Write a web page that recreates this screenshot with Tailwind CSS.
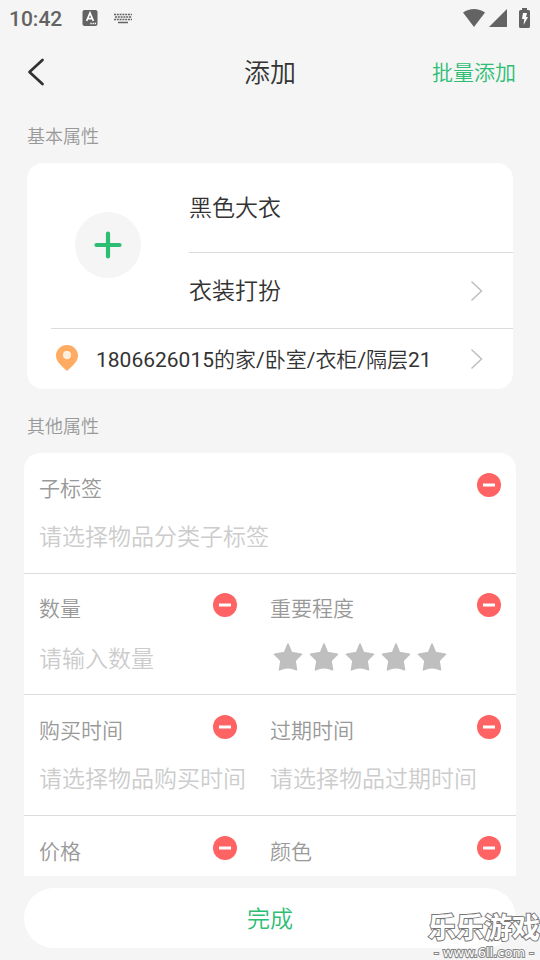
<!DOCTYPE html>
<html lang="zh-CN">
<head>
<meta charset="utf-8">
<meta name="viewport" content="width=device-width, initial-scale=1">
<title>添加</title>
<script src="https://cdn.jsdelivr.net/npm/@tailwindcss/browser@4"></script>
</head>
<body class="bg-[#f5f5f5] font-['Roboto','Noto_Sans_CJK_SC',sans-serif] text-[#333]">
<svg class="hidden" aria-hidden="true">
  <symbol id="minus" viewBox="0 0 24 24"><circle cx="12" cy="12" r="12" fill="#ff6363"/><path d="M6 12h12" stroke="#fff" stroke-width="3"/></symbol>
  <symbol id="chevron" viewBox="0 0 12 20"><path d="M1 1l9.500 9L1 19" fill="none" stroke="#bfbfbf" stroke-width="1.600" stroke-linecap="round" stroke-linejoin="round"/></symbol>
  <symbol id="star" viewBox="0 0 30 30"><path d="M15 2L18.400 10.600 28.500 12.200 22 18.600 23.500 27.800Q15 23.400 6.500 27.800L8 18.600 1.500 12.200 11.600 10.600z" fill="#bfbfbf" stroke="#bfbfbf" stroke-width="1.600" stroke-linejoin="round"/></symbol>
</svg>
<div class="relative flex h-screen flex-col overflow-hidden">
  <div class="flex h-9 shrink-0 items-center pl-[9px] pr-[10px] text-[#636363]">
    <span class="pt-px text-[21px] leading-9 font-medium">10:42</span>
    <svg class="ml-5 h-4 w-4" viewBox="0 0 16 16"><rect x=".5" width="15" height="16" rx="2" fill="currentColor"/><path d="M4.600 11L8 3l3.400 8M5.800 8.600h4.400" fill="none" stroke="#fff" stroke-width="1.700"/><path d="M8.300 13.500h1.400m.8 0h1.400m.8 0h1.400" stroke="#fff" stroke-width="1.300"/></svg>
    <svg class="ml-[15px] h-[11px] w-5" viewBox="0 0 20 11"><path d="M1 1.500h18M2 4h17M1 6.500h18" stroke="currentColor" stroke-width="1.700" stroke-dasharray="2 .8"/><path d="M5 9.500h10" stroke="currentColor" stroke-width="1.500"/></svg>
    <svg class="ml-auto h-5 w-[22px]" viewBox="0 0 22 20"><path d="M0 4.500C6.500-.2 15.500-.2 22 4.500L11 19z" fill="currentColor"/></svg>
    <svg class="ml-1 h-[18px] w-[18px]" viewBox="0 0 18 18"><path d="M18 0v18H0z" fill="currentColor"/></svg>
    <svg class="ml-3 h-5 w-[11px]" viewBox="0 0 11 20"><path d="M3 0h5v2h1.500Q11 2 11 3.500v15Q11 20 9.500 20h-8Q0 20 0 18.500v-15Q0 2 1.500 2H3z" fill="currentColor"/><path d="M4 5h4l-1 4h2l-4.500 8 .8-6H3z" fill="#fff"/></svg>
  </div>
  <header class="grid h-[72px] shrink-0 grid-cols-[1fr_auto_1fr] items-center px-6">
    <button type="button" aria-label="返回" class="justify-self-start"><svg class="h-8 w-6" viewBox="0 0 24 32"><path d="M18.500 4L5.500 16l13 12" fill="none" stroke="#303133" stroke-width="2.700" stroke-linecap="round" stroke-linejoin="round"/></svg></button>
    <h1 class="pt-0.5 text-[26px] leading-8 font-[350]">添加</h1>
    <button type="button" class="justify-self-end pt-0.5 text-[21px] leading-8 font-[350] text-[#2dbe74]">批量添加</button>
  </header>
  <main class="min-h-0 flex-1 overflow-y-auto [scrollbar-width:none]">
    <h2 class="px-[27px] pt-[17px] text-[18px] leading-6 font-[350] text-[#999]">基本属性</h2>
    <section class="mx-[27px] mt-[14px] rounded-[16px] bg-white">
      <div class="flex">
        <div class="flex w-[162px] shrink-0 items-center justify-center pb-0.5">
          <button type="button" aria-label="添加图片" class="flex h-[66px] w-[66px] items-center justify-center rounded-full bg-[#f5f5f5]"><svg class="h-7 w-7" viewBox="0 0 28 28"><path d="M14 2.500v23M2.500 14h23" stroke="#2dbe74" stroke-width="4.200" stroke-linecap="round"/></svg></button>
        </div>
        <div class="min-w-0 flex-1">
          <input type="text" aria-label="物品名称" value="黑色大衣" class="block h-[90px] w-full border-b border-[#dcdcdc] pb-1 text-[23px] font-[350] outline-none">
          <button type="button" class="flex h-[75px] w-full items-center justify-between pr-[30px] text-[23px] font-[350]"><span class="pt-1">衣装打扮</span><svg class="h-5 w-3"><use href="#chevron"/></svg></button>
        </div>
      </div>
      <button type="button" class="ml-6 flex h-[61px] w-[calc(100%-24px)] items-center border-t border-[#dcdcdc] pr-[30px] pl-[5px] text-[21px] font-[350]">
        <svg class="mb-0.5 h-[26px] w-[22px]" viewBox="0 0 22 26"><path d="M11 0C4.900 0 0 4.800 0 10.800 0 16.500 5.500 21 11 26c5.500-5 11-9.500 11-15.200C22 4.800 17.100 0 11 0z" fill="#ffab61"/><circle cx="11" cy="10" r="4.200" fill="#ffeddd"/></svg>
        <span class="ml-[18px] pt-[3px] font-normal">1806626015<span class="font-[350]">的家</span>/<span class="font-[350]">卧室</span>/<span class="font-[350]">衣柜</span>/<span class="font-[350]">隔层</span>21</span>
        <svg class="ml-auto h-5 w-3"><use href="#chevron"/></svg>
      </button>
    </section>
    <h2 class="px-[27px] pt-[26px] text-[18px] leading-6 font-[350] text-[#999]">其他属性</h2>
    <section class="mx-6 mt-[14px] rounded-[16px] bg-white text-[21px] font-[350] text-[#999]">
      <div class="h-[121px] border-b border-[#dcdcdc] pt-5 pl-[15px]">
        <div class="flex items-start justify-between pr-[15px]"><label for="tag" class="leading-8">子标签</label><button type="button" aria-label="移除子标签"><svg class="h-6 w-6"><use href="#minus"/></svg></button></div>
        <input id="tag" type="text" placeholder="请选择物品分类子标签" class="mt-3.5 block h-9 w-full text-[23px] outline-none placeholder:text-[#ccc]">
      </div>
      <div class="grid h-[121px] grid-cols-2 border-b border-[#dcdcdc] pt-[19px]">
        <div class="pl-[15px]">
          <div class="flex items-start justify-between pr-[33px]"><label for="count" class="leading-8">数量</label><button type="button" aria-label="移除数量"><svg class="h-6 w-6"><use href="#minus"/></svg></button></div>
          <input id="count" type="text" placeholder="请输入数量" class="mt-4 block h-9 w-full text-[23px] outline-none placeholder:text-[#ccc]">
        </div>
        <fieldset aria-labelledby="level">
          <div class="flex items-start justify-between pr-[15px]"><span id="level" class="leading-8">重要程度</span><button type="button" aria-label="移除重要程度"><svg class="h-6 w-6"><use href="#minus"/></svg></button></div>
          <div class="mt-3.5 flex h-9 items-center">
            <label class="relative flex w-9 justify-center"><input type="radio" name="level" aria-label="1星" class="sr-only"><svg class="h-[30px] w-[30px]"><use href="#star"/></svg></label>
            <label class="relative flex w-9 justify-center"><input type="radio" name="level" aria-label="2星" class="sr-only"><svg class="h-[30px] w-[30px]"><use href="#star"/></svg></label>
            <label class="relative flex w-9 justify-center"><input type="radio" name="level" aria-label="3星" class="sr-only"><svg class="h-[30px] w-[30px]"><use href="#star"/></svg></label>
            <label class="relative flex w-9 justify-center"><input type="radio" name="level" aria-label="4星" class="sr-only"><svg class="h-[30px] w-[30px]"><use href="#star"/></svg></label>
            <label class="relative flex w-9 justify-center"><input type="radio" name="level" aria-label="5星" class="sr-only"><svg class="h-[30px] w-[30px]"><use href="#star"/></svg></label>
          </div>
        </fieldset>
      </div>
      <div class="grid h-[121px] grid-cols-2 border-b border-[#dcdcdc] pt-5">
        <div class="pl-[15px]">
          <div class="flex items-start justify-between pr-[33px]"><label for="bought" class="leading-8">购买时间</label><button type="button" aria-label="移除购买时间"><svg class="h-6 w-6"><use href="#minus"/></svg></button></div>
          <input id="bought" type="text" placeholder="请选择物品购买时间" class="mt-3.5 block h-9 w-full text-[23px] outline-none placeholder:text-[#ccc]">
        </div>
        <div>
          <div class="flex items-start justify-between pr-[15px]"><label for="expires" class="leading-8">过期时间</label><button type="button" aria-label="移除过期时间"><svg class="h-6 w-6"><use href="#minus"/></svg></button></div>
          <input id="expires" type="text" placeholder="请选择物品过期时间" class="mt-3.5 block h-9 w-full text-[23px] outline-none placeholder:text-[#ccc]">
        </div>
      </div>
      <div class="grid grid-cols-2 py-5">
        <div class="flex items-start justify-between pr-[33px] pl-[15px]"><span class="leading-8">价格</span><button type="button" aria-label="移除价格"><svg class="h-6 w-6"><use href="#minus"/></svg></button></div>
        <div class="flex items-start justify-between pr-[15px]"><span class="leading-8">颜色</span><button type="button" aria-label="移除颜色"><svg class="h-6 w-6"><use href="#minus"/></svg></button></div>
      </div>
    </section>
  </main>
  <footer class="shrink-0 px-6 py-3">
    <button type="button" class="block h-[60px] w-full rounded-full bg-white pt-1 text-[23px] font-[350] text-[#2dbe74]">完成</button>
  </footer>
  <div class="pointer-events-none absolute right-0 bottom-0 text-center text-white">
    <div class="text-[28px] leading-8 font-bold [-webkit-text-stroke:2px_#777] [paint-order:stroke_fill] [stroke-linejoin:round]">乐乐游戏</div>
    <div class="font-['DejaVu_Sans',sans-serif] text-[13px] leading-[15px] [-webkit-text-stroke:2px_#888] [paint-order:stroke_fill]">- www.6ll.com -</div>
  </div>
</div>
</body>
</html>
